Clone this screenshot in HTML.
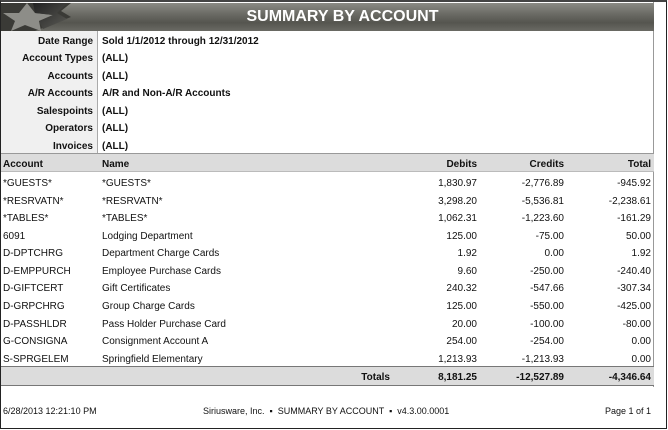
<!DOCTYPE html>
<html><head><meta charset="utf-8"><style>
*{margin:0;padding:0;box-sizing:border-box}
body{width:668px;height:430px;background:#fff;font-family:"Liberation Sans",Arial,sans-serif;font-size:10px;color:#111;position:relative;overflow:hidden}
.frame{position:absolute;left:0;top:0;width:667px;height:429px;border:1px solid #222;border-top:2px solid #444}
.content{position:absolute;left:1px;top:2px;width:653px;height:385px;border-right:1px solid #999}
.hdr{position:absolute;left:0;top:1px;width:653px;height:28px;background:linear-gradient(#8a8a84,#6a6a64 40%,#55554f 70%,#6a6a64);}
.hdr .t{position:absolute;left:0;width:653px;text-align:center;top:5px;padding-left:30px;color:#fff;font-weight:bold;font-size:16px;letter-spacing:0}
.lab{position:absolute;left:0;top:29px;width:97px;height:124px;background:#f0f0f0;border-right:1px solid #aaa}
.r{position:absolute;font-size:10px;white-space:nowrap;transform:translateY(1px)}
.b{font-weight:bold}
.lr{text-align:right;width:93px;left:0}
.thead{position:absolute;left:0;top:153px;width:653px;height:19px;background:#dcdcdc;border-top:1px solid #999;border-bottom:1px solid #bbb}
.tot{position:absolute;left:0;top:366px;width:653px;height:20px;background:#dcdcdc;border-top:1px solid #777;border-bottom:1px solid #777}
.num{text-align:right}
</style></head><body>
<div class="frame"></div>
<div class="content">
<div class="hdr">
<svg width="76" height="28" style="position:absolute;left:0;top:0">
<defs><linearGradient id="g" x1="0" y1="0" x2="1" y2="1"><stop offset="0" stop-color="#222"/><stop offset="1" stop-color="#5a5a55"/></linearGradient></defs>
<polygon points="0,0 70,0 60,8 70,14 34,28 0,28" fill="#3a3a36"/>
<polygon points="2,10 18,10 26,0 34,10 52,12 38,18 40,28 24,22 10,28 14,18" fill="#8d8d88"/>
<polygon points="32,0 66,0 56,10 66,16 42,26 38,18 52,12 34,10" fill="url(#g)"/>
</svg>
<div class="t">SUMMARY BY ACCOUNT</div></div>
<div class="lab"></div>
</div>
<div class="r b lr" style="top:35px">Date Range</div><div class="r b" style="left:102px;top:35px">Sold 1/1/2012 through 12/31/2012</div>
<div class="r b lr" style="top:52px">Account Types</div><div class="r b" style="left:102px;top:52px">(ALL)</div>
<div class="r b lr" style="top:70px">Accounts</div><div class="r b" style="left:102px;top:70px">(ALL)</div>
<div class="r b lr" style="top:87px">A/R Accounts</div><div class="r b" style="left:102px;top:87px">A/R and Non-A/R Accounts</div>
<div class="r b lr" style="top:105px">Salespoints</div><div class="r b" style="left:102px;top:105px">(ALL)</div>
<div class="r b lr" style="top:122px">Operators</div><div class="r b" style="left:102px;top:122px">(ALL)</div>
<div class="r b lr" style="top:140px">Invoices</div><div class="r b" style="left:102px;top:140px">(ALL)</div>
<div class="thead" style="left:1px"></div>
<div class="r b" style="left:3px;top:158px">Account</div>
<div class="r b" style="left:102px;top:158px">Name</div>
<div class="r b num" style="right:191px;top:158px">Debits</div>
<div class="r b num" style="right:104px;top:158px">Credits</div>
<div class="r b num" style="right:17px;top:158px">Total</div>

<div class="r" style="left:3px;top:177px">*GUESTS*</div><div class="r" style="left:102px;top:177px">*GUESTS*</div><div class="r num" style="right:191px;top:177px">1,830.97</div><div class="r num" style="right:104px;top:177px">-2,776.89</div><div class="r num" style="right:17px;top:177px">-945.92</div>
<div class="r" style="left:3px;top:195px">*RESRVATN*</div><div class="r" style="left:102px;top:195px">*RESRVATN*</div><div class="r num" style="right:191px;top:195px">3,298.20</div><div class="r num" style="right:104px;top:195px">-5,536.81</div><div class="r num" style="right:17px;top:195px">-2,238.61</div>
<div class="r" style="left:3px;top:212px">*TABLES*</div><div class="r" style="left:102px;top:212px">*TABLES*</div><div class="r num" style="right:191px;top:212px">1,062.31</div><div class="r num" style="right:104px;top:212px">-1,223.60</div><div class="r num" style="right:17px;top:212px">-161.29</div>
<div class="r" style="left:3px;top:230px">6091</div><div class="r" style="left:102px;top:230px">Lodging Department</div><div class="r num" style="right:191px;top:230px">125.00</div><div class="r num" style="right:104px;top:230px">-75.00</div><div class="r num" style="right:17px;top:230px">50.00</div>
<div class="r" style="left:3px;top:247px">D-DPTCHRG</div><div class="r" style="left:102px;top:247px">Department Charge Cards</div><div class="r num" style="right:191px;top:247px">1.92</div><div class="r num" style="right:104px;top:247px">0.00</div><div class="r num" style="right:17px;top:247px">1.92</div>
<div class="r" style="left:3px;top:265px">D-EMPPURCH</div><div class="r" style="left:102px;top:265px">Employee Purchase Cards</div><div class="r num" style="right:191px;top:265px">9.60</div><div class="r num" style="right:104px;top:265px">-250.00</div><div class="r num" style="right:17px;top:265px">-240.40</div>
<div class="r" style="left:3px;top:282px">D-GIFTCERT</div><div class="r" style="left:102px;top:282px">Gift Certificates</div><div class="r num" style="right:191px;top:282px">240.32</div><div class="r num" style="right:104px;top:282px">-547.66</div><div class="r num" style="right:17px;top:282px">-307.34</div>
<div class="r" style="left:3px;top:300px">D-GRPCHRG</div><div class="r" style="left:102px;top:300px">Group Charge Cards</div><div class="r num" style="right:191px;top:300px">125.00</div><div class="r num" style="right:104px;top:300px">-550.00</div><div class="r num" style="right:17px;top:300px">-425.00</div>
<div class="r" style="left:3px;top:318px">D-PASSHLDR</div><div class="r" style="left:102px;top:318px">Pass Holder Purchase Card</div><div class="r num" style="right:191px;top:318px">20.00</div><div class="r num" style="right:104px;top:318px">-100.00</div><div class="r num" style="right:17px;top:318px">-80.00</div>
<div class="r" style="left:3px;top:335px">G-CONSIGNA</div><div class="r" style="left:102px;top:335px">Consignment Account A</div><div class="r num" style="right:191px;top:335px">254.00</div><div class="r num" style="right:104px;top:335px">-254.00</div><div class="r num" style="right:17px;top:335px">0.00</div>
<div class="r" style="left:3px;top:353px">S-SPRGELEM</div><div class="r" style="left:102px;top:353px">Springfield Elementary</div><div class="r num" style="right:191px;top:353px">1,213.93</div><div class="r num" style="right:104px;top:353px">-1,213.93</div><div class="r num" style="right:17px;top:353px">0.00</div>

<div class="tot" style="left:1px"></div>
<div class="r b num" style="right:278px;top:371px">Totals</div>
<div class="r b num" style="right:191px;top:371px">8,181.25</div>
<div class="r b num" style="right:104px;top:371px">-12,527.89</div>
<div class="r b num" style="right:17px;top:371px">-4,346.64</div>

<div class="r" style="left:3px;top:405px;font-size:9px">6/28/2013 12:21:10 PM</div>
<div class="r" style="left:203px;top:405px;font-size:9px">Siriusware, Inc. &nbsp;▪&nbsp; SUMMARY BY ACCOUNT &nbsp;▪&nbsp; v4.3.00.0001</div>
<div class="r num" style="right:17px;top:405px;font-size:9px">Page 1 of 1</div>
</body></html>
